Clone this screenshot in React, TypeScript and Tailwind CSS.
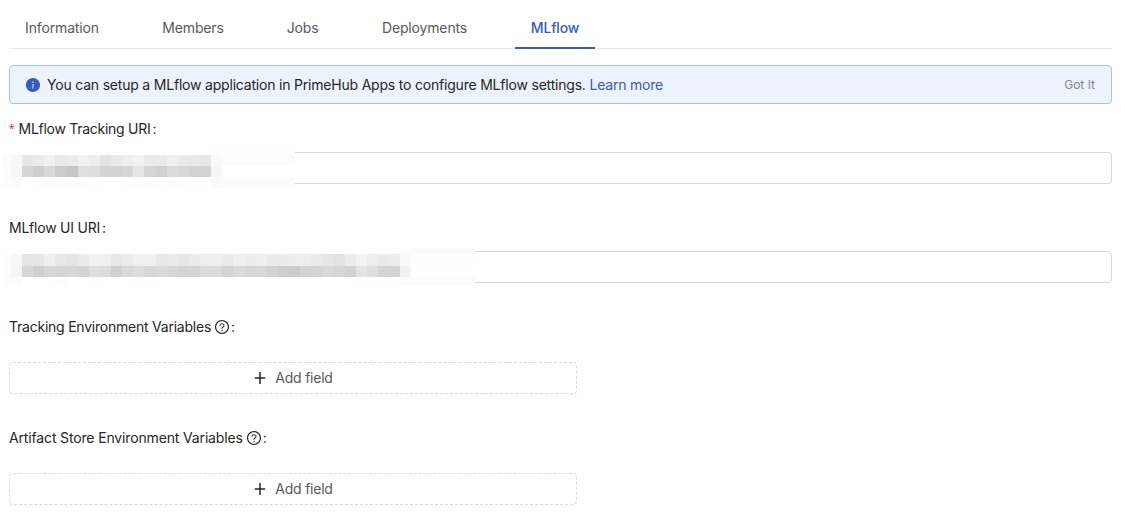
import type { ReactNode } from 'react';
import { AiFillInfoCircle, AiOutlineQuestionCircle } from 'react-icons/ai';

const tabs = [
  { name: 'Information', width: 'w-[106px]' },
  { name: 'Members', width: 'w-[92px]' },
  { name: 'Jobs', width: 'w-[63px]' },
  { name: 'Deployments', width: 'w-[117px]' },
  { name: 'MLflow', width: 'w-[80px]' },
];

// Grey levels of the redaction mosaic, one entry per 11px block.
const trackingRows = [
  [231, 235, 241, 232, 235, 242, 238, 228, 233, 238, 242, 235, 235, 240, 234, 232, 231],
  [214, 207, 217, 204, 198, 222, 221, 211, 211, 214, 229, 213, 209, 219, 215, 211, 211],
];
const uiRows = [
  [229, 231, 239, 232, 229, 235, 241, 240, 231, 235, 240, 240, 232, 234, 231, 235, 238, 238, 234, 239, 236, 238, 234, 235, 237, 237, 234, 230, 227, 236, 243, 237, 234, 236],
  [215, 207, 215, 214, 215, 212, 222, 220, 208, 217, 221, 215, 218, 214, 211, 213, 220, 219, 212, 218, 214, 216, 210, 206, 203, 211, 213, 217, 214, 210, 228, 223, 212, 213],
];

function Cells({ levels }: { levels: number[] }) {
  return (
    <div className="flex h-full">
      {levels.map((v, i) => (
        <span key={i} className="flex-1" style={{ backgroundColor: `rgb(${v},${v},${v})` }} />
      ))}
    </div>
  );
}

function TrackingMask() {
  return (
    <div className="absolute -top-[2px] -left-[8px] grid h-[37px] w-[293px] grid-cols-[9px_11px_189px_11px_73px] grid-rows-[4px_11px_11px_11px] bg-white">
      <span className="col-span-3 bg-[#fefefe]" />
      <span className="col-span-2 bg-[#fdfdfd]" />
      <span className="bg-[#fcfcfc]" />
      <span className="bg-[#f8f8f8]" />
      <Cells levels={trackingRows[0]} />
      <span className="bg-[#f9f9f9]" />
      <span className="bg-[#fcfcfc]" />
      <span className="bg-[#fdfdfd]" />
      <span className="bg-[#f5f5f5]" />
      <Cells levels={trackingRows[1]} />
      <span className="bg-[#f6f6f6]" />
      <span className="bg-white" />
      <span className="bg-[#fdfdfd]" />
      <span className="bg-[#fbfbfb]" />
      <Cells levels={[255, 254, 253, 253, 253, 253, 254, 255, 255, 254, 253, 253, 254, 253, 254, 254, 254]} />
      <span className="bg-[#fafafa]" />
      <span className="bg-[#fbfbfb]" />
    </div>
  );
}

function UiMask() {
  return (
    <div className="absolute -top-[4px] -left-[5px] grid h-[38px] w-[470px] grid-cols-[6px_11px_378px_11px_64px] grid-rows-[6px_12px_11px_9px] bg-white">
      <span className="col-span-3 bg-[#fefefe]" />
      <span className="col-span-2 bg-[#fbfbfb]" />
      <span className="bg-[#fdfdfd]" />
      <span className="bg-[#f7f7f7]" />
      <Cells levels={uiRows[0]} />
      <span className="bg-[#f9f9f9]" />
      <span className="bg-[#fefefe]" />
      <span className="bg-[#fdfdfd]" />
      <span className="bg-[#f5f5f5]" />
      <Cells levels={uiRows[1]} />
      <span className="bg-[#f2f2f2]" />
      <span className="bg-white" />
      <span className="bg-[#fdfdfd]" />
      <span className="bg-[#fcfcfc]" />
      <Cells levels={[255, 255, 255, 253, 255, 255, 254, 255, 255, 255, 254, 254, 255, 255, 255, 255, 255, 255, 255, 255, 255, 255, 255, 255, 255, 255, 255, 255, 255, 255, 254, 254, 255, 254]} />
      <span className="col-span-2 bg-[#fbfbfb]" />
    </div>
  );
}

function Label({
  children,
  required,
  help,
  tracking = 'tracking-[-0.23px]',
}: {
  children: ReactNode;
  required?: boolean;
  help?: boolean;
  tracking?: string;
}) {
  return (
    <div className="flex h-[22px] items-center whitespace-pre">
      {required && <span className="mr-1 w-[5.5px] font-['Liberation_Sans'] text-[14px] text-[#f5222d]">*</span>}
      <span className={tracking}>{children}</span>
      {help && <AiOutlineQuestionCircle className="-mr-px ml-[3px] size-4" />}
      <span className="ml-[2px]">:</span>
    </div>
  );
}

function TextField({ children }: { children: ReactNode }) {
  return <div className="relative h-8 rounded border border-[#d9d9d9] bg-white">{children}</div>;
}

function AddField() {
  return (
    <button className="flex h-8 w-[568px] items-center justify-center rounded border border-dashed border-[#d9d9d9] bg-white text-[#595959] shadow-[0_2px_0_rgba(0,0,0,0.015)]">
      <svg viewBox="0 0 14 14" className="mr-2 size-[14px] text-[#262626]" stroke="currentColor" strokeWidth="1.5" fill="none">
        <path d="M7 1v12M1.8 7h10.4" />
      </svg>
      <span className="tracking-[-0.22px]">Add field</span>
    </button>
  );
}

export default function App() {
  return (
    <main className="h-[531px] overflow-hidden bg-white px-[9px] font-['Inter',sans-serif] text-[14px] leading-[22px] text-[#262626]">
      <nav className="flex h-[49px] gap-8 border-b border-[#e8e8e8]">
        {tabs.map((tab) => (
          <div
            key={tab.name}
            className={`${tab.width} -mb-px flex shrink-0 justify-center pt-[17px] tracking-[-0.15px] ${
              tab.name === 'MLflow' ? 'border-b-2 border-[#365abd] font-medium text-[#365abd]' : 'text-[#595959]'
            }`}
          >
            {tab.name}
          </div>
        ))}
      </nav>

      <div className="mt-4 flex h-[39px] items-center rounded border border-[#aec2e2] bg-[#ecf3fc] px-[15px]">
        <AiFillInfoCircle className="mr-[6px] size-4 shrink-0 text-[#365abd]" />
        <span className="tracking-[-0.2px]">
          You can setup a MLflow application in PrimeHub Apps to configure MLflow settings.{' '}
          <a className="text-[#365abd]">Learn more</a>
        </span>
        <span className="mr-px ml-auto text-[12px] text-[#84888e]">Got It</span>
      </div>

      <form className="pt-[14px]">
        <Label required tracking="tracking-[-0.27px]">
          MLflow Tracking URI
        </Label>
        <div className="pt-3">
          <TextField>
            <TrackingMask />
          </TextField>
        </div>
        <div className="pt-[33px]">
          <Label>MLflow UI URI</Label>
        </div>
        <div className="pt-3">
          <TextField>
            <UiMask />
          </TextField>
        </div>
        <div className="pt-[33px]">
          <Label help>Tracking Environment Variables</Label>
        </div>
        <div className="pt-6">
          <AddField />
        </div>
        <div className="pt-[33px]">
          <Label help tracking="tracking-[-0.15px]">
            Artifact Store Environment Variables
          </Label>
        </div>
        <div className="pt-6">
          <AddField />
        </div>
      </form>
    </main>
  );
}
